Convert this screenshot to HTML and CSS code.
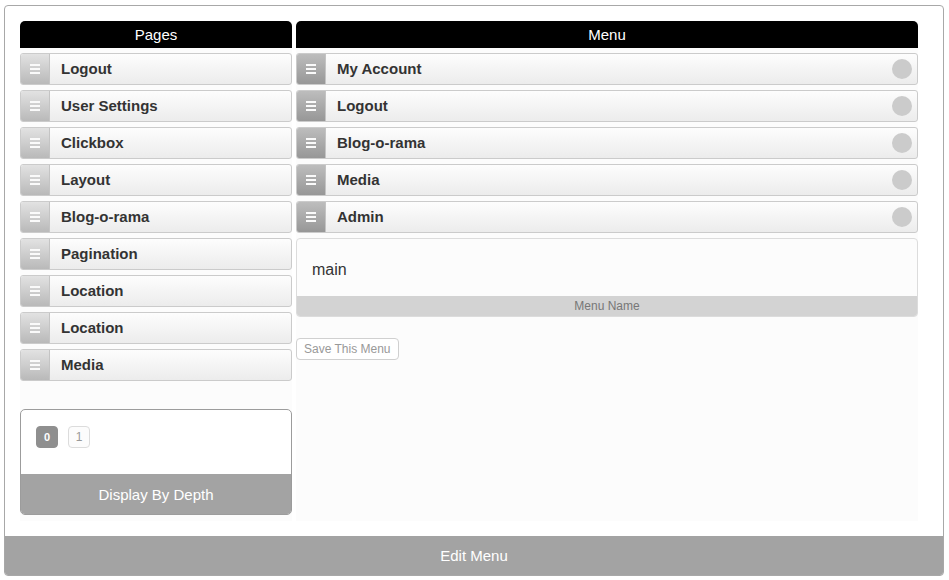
FILE: index.html
```html
<!DOCTYPE html>
<html>
<head>
<meta charset="utf-8">
<link rel="stylesheet" href="styles.css">
</head>
<body>
<div class="box">
  <div class="content">
    <div class="col pages">
      <div class="head">Pages</div>
      <div class="list">
        <div class="item"><span class="handle"><i></i></span><span class="label">Logout</span></div>
        <div class="item"><span class="handle"><i></i></span><span class="label">User Settings</span></div>
        <div class="item"><span class="handle"><i></i></span><span class="label">Clickbox</span></div>
        <div class="item"><span class="handle"><i></i></span><span class="label">Layout</span></div>
        <div class="item"><span class="handle"><i></i></span><span class="label">Blog-o-rama</span></div>
        <div class="item"><span class="handle"><i></i></span><span class="label">Pagination</span></div>
        <div class="item"><span class="handle"><i></i></span><span class="label">Location</span></div>
        <div class="item"><span class="handle"><i></i></span><span class="label">Location</span></div>
        <div class="item"><span class="handle"><i></i></span><span class="label">Media</span></div>
      </div>
      <div class="depth">
        <div class="depth-btns">
          <span class="dbtn on">0</span>
          <span class="dbtn">1</span>
        </div>
        <div class="depth-bar">Display By Depth</div>
      </div>
    </div>
    <div class="col menu">
      <div class="head">Menu</div>
      <div class="list">
        <div class="item"><span class="handle"><i></i></span><span class="label">My Account</span><span class="dot"></span></div>
        <div class="item"><span class="handle"><i></i></span><span class="label">Logout</span><span class="dot"></span></div>
        <div class="item"><span class="handle"><i></i></span><span class="label">Blog-o-rama</span><span class="dot"></span></div>
        <div class="item"><span class="handle"><i></i></span><span class="label">Media</span><span class="dot"></span></div>
        <div class="item"><span class="handle"><i></i></span><span class="label">Admin</span><span class="dot"></span></div>
      </div>
      <div class="namebox">
        <div class="nameval">main</div>
        <div class="namelabel">Menu Name</div>
      </div>
      <div class="save-row"><span class="save">Save This Menu</span></div>
    </div>
  </div>
  <div class="footer">Edit Menu</div>
</div>
</body>
</html>
```
FILE: styles.css
```css
html, body { margin: 0; padding: 0; background: #fff; }
body {
  padding: 5px 5px 0 4px;
  font-family: "Liberation Sans", Arial, sans-serif;
}
.box {
  width: 938px;
  border: 1px solid #a8a8a8;
  border-radius: 4px;
  overflow: hidden;
  background: #fff;
}
.content {
  display: grid;
  grid-template-columns: 272px 622px;
  column-gap: 4px;
  padding: 15px 0 15px 15px;
  height: 500px;
  box-sizing: content-box;
}
.col {
  display: flex;
  flex-direction: column;
  background: #fcfcfc;
}
.head {
  height: 27px;
  line-height: 27px;
  background: #000;
  color: #fff;
  text-align: center;
  font-size: 15px;
  border-radius: 5px 5px 0 0;
}
.list {
  display: flex;
  flex-direction: column;
  gap: 5px;
  padding-top: 5px;
}
.item {
  display: flex;
  align-items: center;
  height: 30px;
  border: 1px solid #cbcbcb;
  border-radius: 3px;
  background: linear-gradient(#fdfdfd, #ececec);
  overflow: hidden;
}
.handle {
  width: 28px;
  height: 30px;
  flex: none;
  display: flex;
  align-items: center;
  justify-content: center;
  border-right: 1px solid #c4c4c4;
  background: linear-gradient(#e2e2e2, #b9b9b9);
}
.menu .handle { background: linear-gradient(#bdbdbd, #979797); }
.handle i {
  display: block;
  width: 10px;
  height: 2px;
  background: #fafafa;
  box-shadow: 0 4px 0 #fafafa, 0 -4px 0 #fafafa;
}
.label {
  flex: 1;
  padding-left: 11px;
  padding-bottom: 2px;
  font-size: 15px;
  font-weight: bold;
  color: #333;
}
.dot {
  width: 20px;
  height: 20px;
  border-radius: 50%;
  background: #cbcbcb;
  margin-right: 5px;
  flex: none;
}
.depth {
  margin-top: 28px;
  border: 1px solid #9c9c9c;
  border-radius: 5px;
  background: #fff;
  overflow: hidden;
}
.depth-btns {
  display: flex;
  gap: 10px;
  padding: 16px 15px 0;
  height: 48px;
}
.dbtn {
  width: 20px;
  height: 20px;
  line-height: 20px;
  text-align: center;
  border: 1px solid #dcdcdc;
  border-radius: 4px;
  background: #fcfcfc;
  color: #999;
  font-size: 12px;
}
.dbtn.on {
  background: #8f8f8f;
  border-color: #8f8f8f;
  color: #fff;
  font-weight: bold;
  font-size: 11px;
}
.depth-bar {
  height: 40px;
  line-height: 42px;
  background: #a3a3a3;
  color: #fff;
  text-align: center;
  font-size: 15px;
}
.namebox {
  margin-top: 5px;
  border: 1px solid #dcdcdc;
  border-radius: 4px;
  background: #fcfcfc;
  overflow: hidden;
}
.nameval {
  height: 57px;
  line-height: 62px;
  padding-left: 15px;
  font-size: 16px;
  color: #333;
}
.namelabel {
  height: 20px;
  line-height: 20px;
  background: #d3d3d3;
  color: #777;
  font-size: 12px;
  text-align: center;
}
.save-row {
  display: flex;
  padding-top: 21px;
}
.save {
  height: 20px;
  line-height: 20px;
  padding: 0 7px;
  border: 1px solid #d0d0d0;
  border-radius: 4px;
  background: #fff;
  color: #999;
  font-size: 12px;
}
.footer {
  height: 39px;
  line-height: 40px;
  background: #a3a3a3;
  color: #fff;
  text-align: center;
  font-size: 15px;
}
```
